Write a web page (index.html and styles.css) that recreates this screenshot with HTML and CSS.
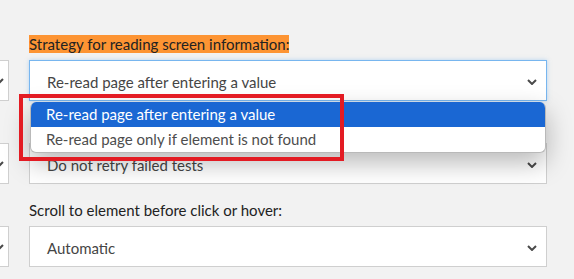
FILE: index.html
```html
<!DOCTYPE html>
<html lang="en">

<head>
  <meta charset="UTF-8" />
  <meta name="viewport" content="width=device-width, initial-scale=1.0" />
  <title>Test Settings</title>
  <link rel="stylesheet" href="styles.css">
</head>

<body>
  <div class="page">

    <div class="side">
      <div class="stub">
        <svg class="chevron stub-chevron" viewBox="0 0 10 6"><path d="M1 1 L5 5 L9 1" /></svg>
      </div>
      <div class="stub">
        <svg class="chevron stub-chevron" viewBox="0 0 10 6"><path d="M1 1 L5 5 L9 1" /></svg>
      </div>
      <div class="stub">
        <svg class="chevron stub-chevron" viewBox="0 0 10 6"><path d="M1 1 L5 5 L9 1" /></svg>
      </div>
    </div>

    <div class="form">

      <div class="field">
        <label class="label"><span class="highlight">Strategy for reading screen information:</span></label>
        <div class="select-wrap">
          <div class="select select-focused">
            <span class="select-text">Re-read page after entering a value</span>
            <svg class="chevron" viewBox="0 0 10 6"><path d="M1 1 L5 5 L9 1" /></svg>
          </div>
          <ul class="menu">
            <li class="menu-item menu-item-active">Re-read page after entering a value</li>
            <li class="menu-item">Re-read page only if element is not found</li>
          </ul>
          <div class="callout"></div>
        </div>
      </div>

      <div class="field">
        <!-- label of this field sits under the open list -->
        <div class="label label-spacer"></div>
        <div class="select-wrap">
          <div class="select">
            <span class="select-text">Do not retry failed tests</span>
            <svg class="chevron" viewBox="0 0 10 6"><path d="M1 1 L5 5 L9 1" /></svg>
          </div>
        </div>
      </div>

      <div class="field">
        <label class="label">Scroll to element before click or hover:</label>
        <div class="select-wrap">
          <div class="select">
            <span class="select-text">Automatic</span>
            <svg class="chevron" viewBox="0 0 10 6"><path d="M1 1 L5 5 L9 1" /></svg>
          </div>
        </div>
      </div>

    </div>
  </div>
</body>

</html>
```

FILE: styles.css
```css
/* Base Reset */
* {
  margin: 0;
  padding: 0;
  box-sizing: border-box;
}

body {
  background-color: #f2f2f2;
  font-family: 'Lato', 'Liberation Sans', sans-serif;
  font-size: 15px;
  color: #222;
  overflow: hidden;
}

.page {
  display: flex;
  gap: 20px;
}

/* Cut-off column on the left */
.side {
  width: 9px;
  padding-top: 60px;
  display: flex;
  flex-direction: column;
  gap: 42px;
  overflow: hidden;
}

.stub {
  width: 9px;
  height: 41px;
  background-color: #fff;
  border: 1px solid #cfcfcf;
  border-left: none;
  display: flex;
  align-items: center;
}

.stub-chevron {
  margin-left: -6px;
}

/* Main column */
.form {
  width: 518px;
  padding-top: 35px;
  display: flex;
  flex-direction: column;
  gap: 17px;
}

.label {
  display: block;
  line-height: 18px;
  margin-bottom: 7px;
  color: #222;
}

.label-spacer {
  height: 18px;
}

.highlight {
  background-color: #fd9433;
}

.select-wrap {
  position: relative;
}

.select {
  height: 41px;
  background-color: #fff;
  border: 1px solid #cfcfcf;
  display: flex;
  align-items: center;
  justify-content: space-between;
  padding: 2px 9px 0 17px;
}

.select-focused {
  border-color: #78b6ef;
  box-shadow: 0 0 4px rgba(120, 182, 239, 0.5);
}

.select-text {
  color: #454545;
}

.chevron {
  width: 10px;
  height: 6px;
  fill: none;
  stroke: #4a4a4a;
  stroke-width: 2;
  flex-shrink: 0;
}

/* Open dropdown list */
.menu {
  position: absolute;
  top: calc(100% + 1px);
  left: 1px;
  right: 1px;
  list-style: none;
  background-color: #fff;
  border: 1px solid #b9b9b9;
  border-top: none;
  border-radius: 6px;
  box-shadow: 0 10px 26px rgba(0, 0, 0, 0.28);
  overflow: hidden;
  z-index: 2;
}

.menu-item {
  height: 25px;
  line-height: 25px;
  padding-left: 15px;
  color: #4d4d4d;
}

.menu-item-active {
  height: 25px;
  line-height: 25px;
  background-color: #1a67d3;
  color: #fff;
}

/* Red annotation box */
.callout {
  position: absolute;
  left: -10px;
  top: 34px;
  width: 325px;
  height: 67px;
  border: 4px solid #e31b23;
  z-index: 3;
}
```
